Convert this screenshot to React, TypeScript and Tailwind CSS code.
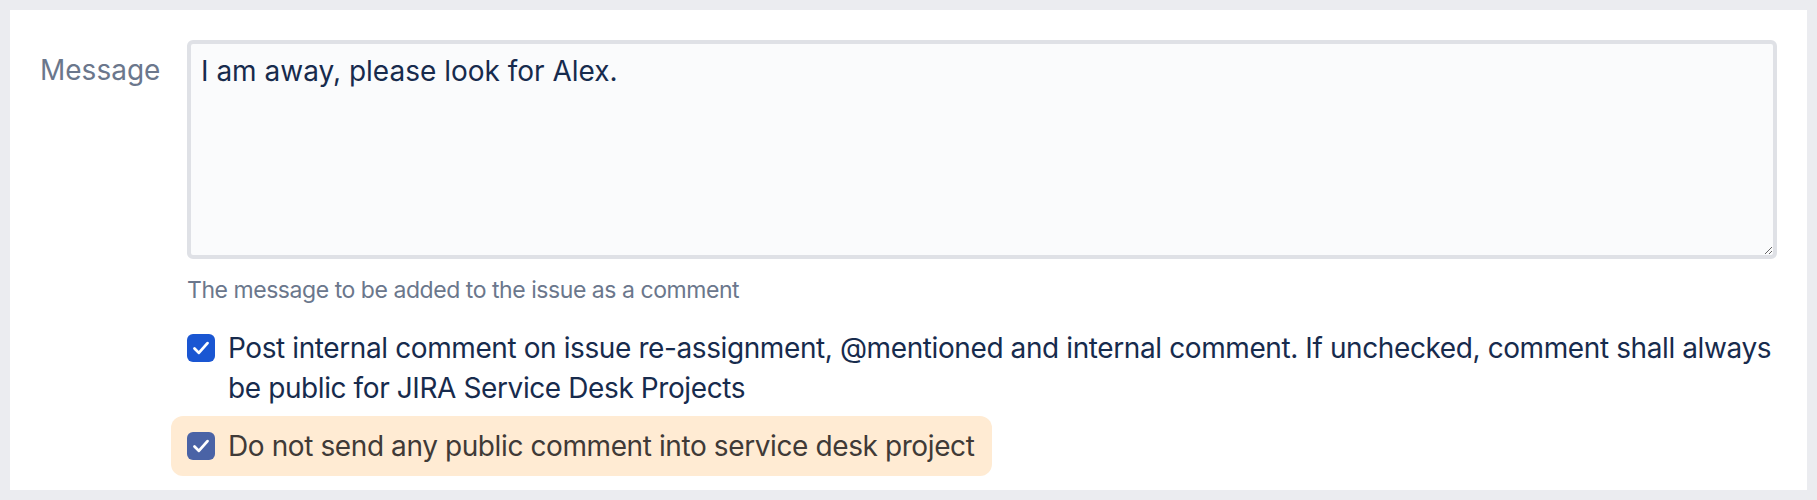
import React from 'react'

function CheckMark() {
  return (
    <svg viewBox="0 0 24 24" className="h-[26px] w-[26px]" fill="none">
      <path d="M6 12.5l4 4 8-9" stroke="white" strokeWidth="2.6" strokeLinecap="round" strokeLinejoin="round" />
    </svg>
  )
}

function Box({ color }: { color: string }) {
  return (
    <span className={`mt-[6px] flex h-[28px] w-[28px] shrink-0 items-center justify-center rounded-[6px] ${color}`}>
      <CheckMark />
    </span>
  )
}

export default function App() {
  return (
    <div className="min-h-[500px] bg-[#ebecf0] p-[10px] font-['Inter',sans-serif]">
      <div className="flex gap-[31px] bg-white pl-[30px] pr-[30px] pt-[30px] pb-[14px]">
        <label className="mt-[10px] w-[116px] shrink-0 text-right text-[28px] leading-[40px] text-[#6b778c]">
          Message
        </label>
        <div className="flex min-w-0 flex-1 flex-col">
          <textarea
            readOnly
            defaultValue="I am away, please look for Alex."
            className="h-[219px] w-full rounded-[6px] border-4 border-[#dfe1e6] bg-[#fafbfc] px-[10px] pt-[7px] text-[28px] leading-[40px] text-[#172b4d] outline-none"
          />
          <p className="mt-[15px] text-[23px] leading-[32px] tracking-[-0.45px] text-[#6b778c]">
            The message to be added to the issue as a comment
          </p>
          <div className="mt-[22px] flex gap-[13px]">
            <Box color="bg-[#1a56d2]" />
            <span className="text-[28px] leading-[40px] tracking-[-0.4px] text-[#172b4d]">
              Post internal comment on issue re-assignment, @mentioned and internal comment. If unchecked, comment shall always be public for JIRA Service Desk Projects
            </span>
          </div>
          <div className="mt-[8px] -ml-[16px] flex gap-[13px] self-start rounded-[12px] bg-[#ffebd3] py-[10px] pl-[16px] pr-[18px]">
            <Box color="bg-[#4a63a6]" />
            <span className="text-[28px] leading-[40px] tracking-[-0.4px] text-[#403a37]">
              Do not send any public comment into service desk project
            </span>
          </div>
        </div>
      </div>
    </div>
  )
}
